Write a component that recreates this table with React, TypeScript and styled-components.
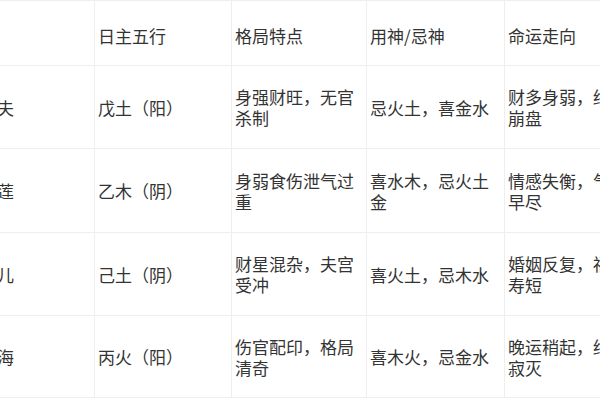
import styled, { createGlobalStyle } from 'styled-components';

const GlobalStyle = createGlobalStyle`
    html, body {
        margin: 0;
        padding: 0;
        background: #ffffff;
        overflow: hidden;
    }
`;

// Page Styling Component
const Page = styled.div`
    width: 600px;
    height: 400px;
    overflow: hidden;
    background: #ffffff;
`;

// Table Styling Component (shifted left, the first column is cut off)
const Table = styled.table`
    margin-left: -41px;
    border-collapse: collapse;
    table-layout: fixed;
    width: 683px;
    font-family: "Noto Sans CJK SC", "Noto Sans", sans-serif;
    font-size: 17px;
    line-height: 21px;
    color: #333333;
`;

const Col = styled.col<{ $w: number }>`
    width: ${(p) => p.$w}px;
`;

const Row = styled.tr<{ $h: number }>`
    height: ${(p) => p.$h}px;
`;

const Cell = styled.td<{ $head?: boolean }>`
    border: 1px solid #eeeeee;
    padding: ${(p) => (p.$head ? '4px 8px 0 3px' : '0 8px 0 3px')};
    vertical-align: middle;
    text-align: left;
    font-weight: normal;
    word-break: break-all;
`;

const headers = ['人物', '日主五行', '格局特点', '用神/忌神', '命运走向'];

const rows = [
    { h: 83, cells: ['武大夫', '戊土（阳）', '身强财旺，无官杀制', '忌火土，喜金水', '财多身弱，终致崩盘'] },
    { h: 84, cells: ['潘金莲', '乙木（阴）', '身弱食伤泄气过重', '喜水木，忌火土金', '情感失衡，气数早尽'] },
    { h: 83, cells: ['李瓶儿', '己土（阴）', '财星混杂，夫宫受冲', '喜火土，忌木水', '婚姻反复，福薄寿短'] },
    { h: 82, cells: ['林如海', '丙火（阳）', '伤官配印，格局清奇', '喜木火，忌金水', '晚运稍起，终归寂灭'] },
];

const App = () => {
    return (
        <Page>
            <GlobalStyle />
            <Table>
                <colgroup>
                    <Col $w={135} />
                    <Col $w={137} />
                    <Col $w={135} />
                    <Col $w={138} />
                    <Col $w={138} />
                </colgroup>
                <tbody>
                    {/* Header Row */}
                    <Row $h={65}>
                        {headers.map((h, i) => (
                            <Cell key={i} $head>{i === 0 ? '' : h}</Cell>
                        ))}
                    </Row>
                    {rows.map((r, i) => (
                        <Row key={i} $h={r.h}>
                            {r.cells.map((c, j) => (
                                <Cell key={j}>{c}</Cell>
                            ))}
                        </Row>
                    ))}
                </tbody>
            </Table>
        </Page>
    );
};

export default App;
